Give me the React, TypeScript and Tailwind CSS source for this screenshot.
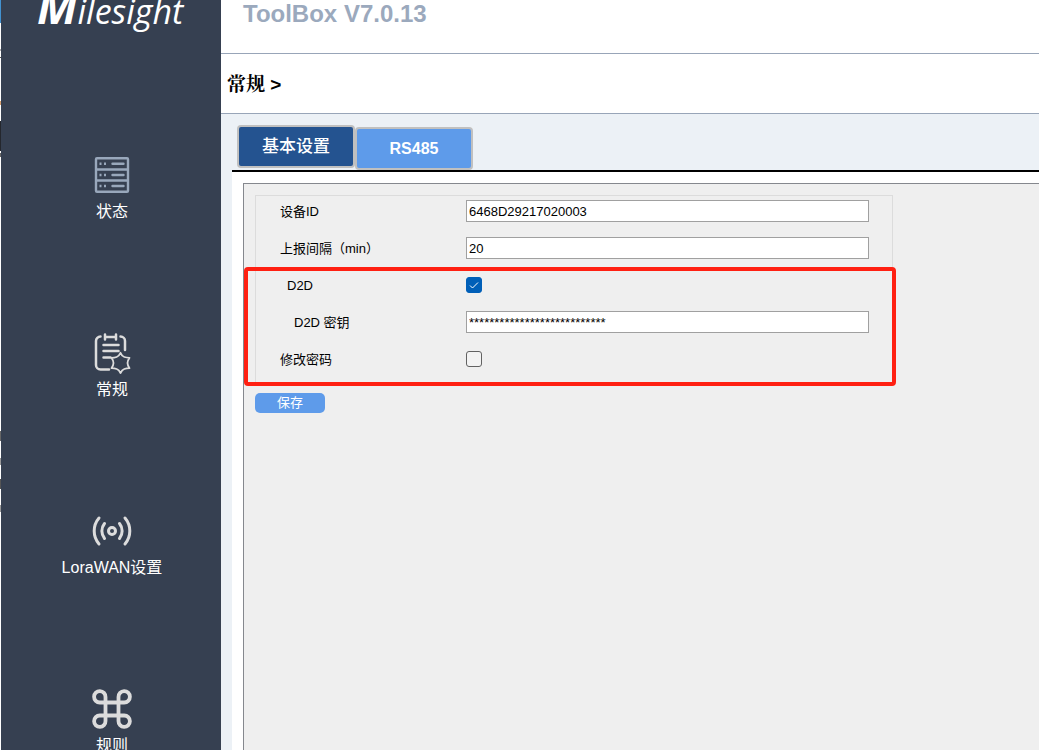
import { useState, type ReactNode } from "react";

const StatusIcon = () => (
  <svg width="36" height="36" viewBox="0 0 36 36" fill="none" stroke="#99a8bc" strokeWidth="2.400">
    <rect x="2" y="1.200" width="32" height="33.600" rx="1" />
    <path d="M2 12.500h32M2 23.500h32" />
    <path d="M18.500 6.700h11M18.500 18h11M18.500 29h11" strokeLinecap="round" />
    <path d="M5.500 6.700h2M10 6.700h2M5.500 18h2M10 18h2M5.500 29h2M10 29h2" />
  </svg>
);

const GeneralIcon = () => (
  <svg
    width="40"
    height="42"
    viewBox="0 0 40 42"
    fill="none"
    stroke="#dcdcdc"
    strokeWidth="2.500"
    strokeLinecap="round"
    strokeLinejoin="round"
  >
    <path d="M8.500 4.500a4.500 4.500 0 0 0-4.500 4.500v24a4.500 4.500 0 0 0 4.500 4.500H17" />
    <path d="M28.500 4.500a4.500 4.500 0 0 1 4.500 4.500V18" />
    <path d="M13 5h11M13 2.500v5M24 2.500v5" />
    <path d="M11.500 13h15M11.500 19h15M11.500 25.500h7" />
    <path
      strokeWidth="1.800"
      d="M28.500 20.800q1.500 3.500 3.800 4.200t5.200 .800q-2 3-2 5.200t2 5.200q-3 0-5.200 .800t-3.800 4q-1.500-3.200-3.800-4t-5.200-.800q2-3 2-5.200t-2-5.200q3 0 5.200-.800t3.800-4.200z"
    />
  </svg>
);

const LoraIcon = () => (
  <svg
    width="40"
    height="32"
    viewBox="0 0 40 32"
    fill="none"
    stroke="#dcdcdc"
    strokeWidth="3"
    strokeLinecap="round"
  >
    <circle cx="20" cy="16" r="3.500" />
    <path d="M12.500 8.500a12 12 0 0 0 0 15M27.500 8.500a12 12 0 0 1 0 15" />
    <path d="M7 3a20 20 0 0 0 0 26M33 3a20 20 0 0 1 0 26" />
  </svg>
);

const RulesIcon = () => (
  <svg width="40" height="40" viewBox="0 0 40 40" fill="none" stroke="#dcdcdc" strokeWidth="3.800">
    <path d="M13.500 13.500V8a5.700 5.700 0 1 0-5.700 5.500h24.400a5.700 5.700 0 1 0-5.700-5.500v24a5.700 5.700 0 1 0 5.700-5.500H7.800a5.700 5.700 0 1 0 5.700 5.500z" />
  </svg>
);

const menu = [
  { label: "状态", icon: <StatusIcon /> },
  { label: "常规", icon: <GeneralIcon /> },
  { label: "LoraWAN设置", icon: <LoraIcon /> },
  { label: "规则", icon: <RulesIcon /> },
];

const Row = ({
  id,
  label,
  className = "",
  children,
}: {
  id: string;
  label: string;
  className?: string;
  children: ReactNode;
}) => {
  return (
    <div className="flex h-[37px] items-start">
      <label
        htmlFor={id}
        className={"w-[186px] shrink-0 text-[13px] leading-6 whitespace-nowrap " + className}
      >
        {label}
      </label>
      {children}
    </div>
  );
};

const TextField = ({ id, initial }: { id: string; initial: string }) => {
  return (
    <input
      id={id}
      type="text"
      defaultValue={initial}
      className="h-[22px] min-w-0 flex-1 border border-[#a0a0a0] bg-white px-0.5 text-[13px] leading-5 outline-none"
    />
  );
};

const CheckField = ({
  id,
  checked,
  onChange,
}: {
  id: string;
  checked: boolean;
  onChange: (value: boolean) => void;
}) => {
  return (
    <span className="relative mt-[3px] size-4">
      <input
        id={id}
        type="checkbox"
        checked={checked}
        onChange={(e) => onChange(e.target.checked)}
        className="block size-4 appearance-none rounded-[3px] border border-[#626262] bg-[#f3f3f3] checked:border-[#005fb8] checked:bg-[#005fb8]"
      />
      {checked && (
        <svg
          className="pointer-events-none absolute inset-0"
          width="16"
          height="16"
          viewBox="0 0 16 16"
          fill="none"
          stroke="#fff"
        >
          <path d="M4 8.500l2.500 2.500 5.500-5.500" />
        </svg>
      )}
    </span>
  );
};

export default function App() {
  const [d2d, setD2d] = useState(true);
  const [changePassword, setChangePassword] = useState(false);

  return (
    <div className="flex h-screen overflow-hidden bg-white font-['Liberation_Sans','Noto_Sans_CJK_SC',sans-serif] text-black">
      {/* sliver of the window behind */}
      <div className="flex w-px shrink-0 flex-col">
        <div className="h-[23px] bg-[#4292d0]" />
        <div className="mt-[26px] h-0.5 bg-[#b0b0b0]" />
        <div className="mt-[6px] h-px bg-[#555]" />
        <div className="mt-[43px] h-1 bg-[#d8a070]" />
        <div className="mt-[16px] h-[30px] bg-[#24272d]" />
        <div className="mt-0.5 h-1 bg-[#666]" />
        <div className="mt-[274px] h-[10px] bg-[#666]" />
        <div className="mt-[17px] h-[7px] bg-[#999]" />
        <div className="mt-[14px] h-[10px] bg-[#555]" />
        <div className="mt-[16px] h-[7px] bg-[#999]" />
      </div>

      <aside className="w-[220px] shrink-0 bg-[#364051] text-white">
        <div className="flex h-8 items-baseline pl-9 font-['Open_Sans',sans-serif] text-[34px] leading-5 italic">
          <span className="text-[46px] leading-3 font-bold">M</span>ilesight
        </div>
        <nav className="pt-[122px] pl-0.5">
          {menu.map((item) => (
            <a key={item.label} href="#" className="flex h-[178px] flex-col items-center gap-1">
              <span className="flex h-[42px] items-center">{item.icon}</span>
              <span className="text-base leading-6">{item.label}</span>
            </a>
          ))}
        </nav>
      </aside>

      <div className="flex min-w-0 flex-1 flex-col">
        <header className="h-[54px] shrink-0 border-b border-[#98a5b8] pl-[22px] text-2xl leading-7 font-bold text-[#9ba9bd]">
          ToolBox V7.0.13
        </header>
        <h1 className="flex h-[60px] shrink-0 items-center border-b border-[#98a5b8] pt-1 pl-[6px] font-['Liberation_Sans','Noto_Serif_CJK_SC','Noto_Sans_CJK_SC',serif] text-[19px] font-bold">
          常规 &gt;
        </h1>

        <main className="flex min-h-0 flex-1 flex-col bg-[#ecf1f6] pl-[11px]">
          <div className="flex h-[58px] shrink-0 items-start border-b-2 border-black pt-[11px] pl-[5px]">
            <button className="h-[43px] w-[118px] rounded-sm border-2 border-[#c0c0c0] bg-[#245390] text-[17px] leading-6 font-medium text-white">
              基本设置
            </button>
            <button className="mt-0.5 h-[43px] w-[118px] rounded-sm border-2 border-[#c0c0c0] bg-[#5e9bea] text-base font-bold text-white">
              RS485
            </button>
          </div>

          <div className="flex flex-1 flex-col bg-white pt-[11px] pl-[11px]">
            <form
              onSubmit={(e) => e.preventDefault()}
              className="flex-1 border-t border-l border-[#85888e] bg-[#efefef] pt-[11px] pl-[11px]"
            >
              <div className="relative w-full max-w-[638px] border border-[#dcdcdc] pt-1 pr-[23px] pl-6">
                <Row id="device-id" label="设备ID">
                  <TextField id="device-id" initial="6468D29217020003" />
                </Row>
                <Row id="interval" label="上报间隔（min）">
                  <TextField id="interval" initial="20" />
                </Row>
                <Row id="d2d" label="D2D" className="pl-[7px]">
                  <CheckField id="d2d" checked={d2d} onChange={setD2d} />
                </Row>
                <Row id="d2d-key" label="D2D 密钥" className="pl-[14px]">
                  <TextField id="d2d-key" initial="***************************" />
                </Row>
                <Row id="change-password" label="修改密码">
                  <CheckField
                    id="change-password"
                    checked={changePassword}
                    onChange={setChangePassword}
                  />
                </Row>
                {/* highlight round the D2D settings */}
                <div className="pointer-events-none absolute top-[71px] -right-1 -bottom-px -left-3 rounded-sm border-4 border-[#ff2012]" />
              </div>
              <button className="mt-[7px] block h-5 w-[70px] rounded-[5px] bg-[#5e9bea] text-[13px] leading-5 text-white">
                保存
              </button>
            </form>
          </div>
        </main>
      </div>
    </div>
  );
}
